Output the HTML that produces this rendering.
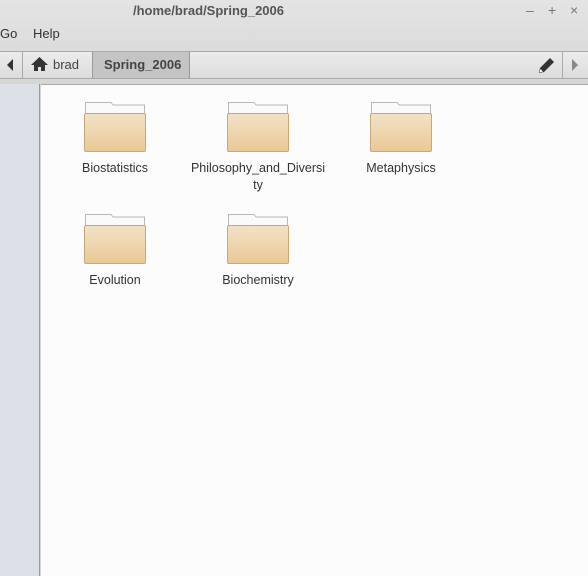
<!DOCTYPE html>
<html><head><style>
*{margin:0;padding:0;box-sizing:border-box}
body{width:588px;height:576px;overflow:hidden;font-family:"Liberation Sans","DejaVu Sans",sans-serif;font-size:13px;color:#333;background:linear-gradient(#e4e4e4,#d6d6d6 84px);position:relative}
.abs{position:absolute}
.title{left:133px;top:3px;font-weight:bold;color:#555;font-size:13px}
.wc{top:2px;color:#777;font-size:14px}
.menu{top:26px;font-size:13px;color:#333}
.bar{left:0;top:51px;width:588px;height:28px;border-top:1px solid #aaa;border-bottom:1px solid #aaa;background:linear-gradient(#ececec,#dcdcdc)}
.sep{top:52px;width:1px;height:26px;background:#aaa}
.side{left:0;top:84px;width:40px;height:492px;background:#dce0e7;border-right:1px solid #999}
.main{left:41px;top:84px;width:547px;height:492px;background:#fcfcfc;border-top:1px solid #aaa}
.f{width:62px;height:52px}
.lbl{width:140px;text-align:center;font-size:12.5px;color:#333;line-height:17px}
</style></head><body>
<div class="abs title">/home/brad/Spring_2006</div>
<div class="abs wc" style="left:526px">&#8211;</div>
<div class="abs wc" style="left:548px">+</div>
<div class="abs wc" style="left:570px">&#215;</div>
<div class="abs menu" style="left:0">Go</div>
<div class="abs menu" style="left:33px">Help</div>
<div class="abs bar"></div>
<div class="abs" style="left:92px;top:52px;width:98px;height:26px;background:#c4c4c4;border-left:1px solid #999;border-right:1px solid #999"></div>
<div class="abs sep" style="left:22px"></div>
<div class="abs sep" style="left:562px"></div>
<svg class="abs" style="left:6px;top:59px" width="8" height="12"><path d="M7 0L1 6L7 12Z" fill="#333"/></svg>
<svg class="abs" style="left:571px;top:59px" width="8" height="12"><path d="M1 0L7 6L1 12Z" fill="#888"/></svg>
<svg class="abs" style="left:31px;top:56px" width="17" height="16"><path d="M8.5 1L0 9H3V15H7V11H10V15H14V9H17Z" fill="#333"/></svg>
<div class="abs" style="left:53px;top:57px;color:#444">brad</div>
<div class="abs" style="left:104px;top:57px;font-weight:bold;color:#444">Spring_2006</div>
<svg class="abs" style="left:538px;top:56px" width="18" height="18"><path d="M1 17L2 12L12 2L16 6L6 16Z" fill="#333"/><path d="M2.5 13L5 15.5L1.5 16.5Z" fill="#fff"/></svg>
<div class="abs side"></div>
<div class="abs main"></div>
<svg width="0" height="0" style="position:absolute"><defs>
<linearGradient id="g" x1="0" y1="0" x2="0" y2="1"><stop offset="0" stop-color="#f3e2c6"/><stop offset="1" stop-color="#e9c996"/></linearGradient>
<symbol id="fold" viewBox="0 0 62 52"><path d="M1.5 1.5H27L29 4H60.5V14H1.5Z" fill="#fafafa" stroke="#b8b8b8"/><rect x="0.5" y="12.5" width="61" height="38" rx="1.5" fill="url(#g)" stroke="#c8a878"/></symbol></defs></svg>
<svg class="abs f" style="left:84px;top:101px"><use href="#fold"/></svg>
<svg class="abs f" style="left:227px;top:101px"><use href="#fold"/></svg>
<svg class="abs f" style="left:370px;top:101px"><use href="#fold"/></svg>
<svg class="abs f" style="left:84px;top:213px"><use href="#fold"/></svg>
<svg class="abs f" style="left:227px;top:213px"><use href="#fold"/></svg>
<div class="abs lbl" style="left:45px;top:160px">Biostatistics</div>
<div class="abs lbl" style="left:188px;top:160px">Philosophy_and_Diversi<br>ty</div>
<div class="abs lbl" style="left:331px;top:160px">Metaphysics</div>
<div class="abs lbl" style="left:45px;top:272px">Evolution</div>
<div class="abs lbl" style="left:188px;top:272px">Biochemistry</div>
</body></html>
